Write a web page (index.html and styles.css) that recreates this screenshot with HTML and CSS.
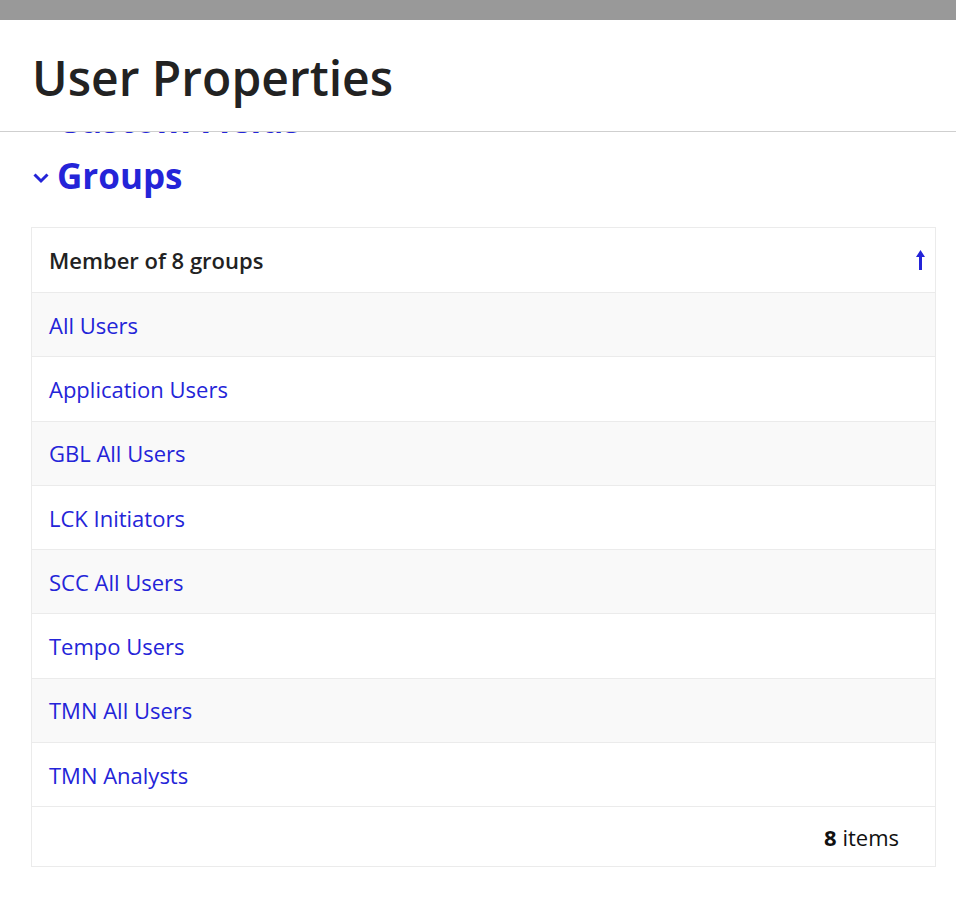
FILE: index.html
```html
<!DOCTYPE html>
<html lang="en">

<head>
    <meta charset="UTF-8">
    <meta name="viewport" content="width=device-width, initial-scale=1.0">
    <title>User Properties</title>
    <link rel="stylesheet" href="styles.css">
</head>

<body>
    <div class="topbar"></div>

    <header class="page-header">
        <h1>User Properties</h1>
    </header>

    <main class="content">
        <div class="scroller">
            <section class="panel">
                <h2 class="panel-title">
                    <svg class="chevron" viewBox="0 0 16 11" width="16" height="11"><path d="M1.5 1.5L8 8l6.5-6.5" fill="none" stroke="currentColor" stroke-width="3"/></svg>
                    Custom Fields
                </h2>
            </section>

            <section class="panel">
                <h2 class="panel-title">
                    <svg class="chevron" viewBox="0 0 16 11" width="16" height="11"><path d="M1.5 1.5L8 8l6.5-6.5" fill="none" stroke="currentColor" stroke-width="3"/></svg>
                    Groups
                </h2>

                <table class="grid">
                    <thead>
                        <tr>
                            <th>
                                <div class="th-inner">
                                    <span>Member of 8 groups</span>
                                    <svg class="sort-icon" viewBox="0 0 9 20" width="9" height="20"><path d="M4.5 0L9 7H6v13H3V7H0z" fill="currentColor"/></svg>
                                </div>
                            </th>
                        </tr>
                    </thead>
                    <tbody>
                        <tr><td><a href="#">All Users</a></td></tr>
                        <tr><td><a href="#">Application Users</a></td></tr>
                        <tr><td><a href="#">GBL All Users</a></td></tr>
                        <tr><td><a href="#">LCK Initiators</a></td></tr>
                        <tr><td><a href="#">SCC All Users</a></td></tr>
                        <tr><td><a href="#">Tempo Users</a></td></tr>
                        <tr><td><a href="#">TMN All Users</a></td></tr>
                        <tr><td><a href="#">TMN Analysts</a></td></tr>
                    </tbody>
                    <tfoot>
                        <tr><td><strong>8</strong> items</td></tr>
                    </tfoot>
                </table>
            </section>
        </div>
    </main>
</body>

</html>
```

FILE: styles.css
```css
* {
    margin: 0;
    padding: 0;
    box-sizing: border-box;
}

body {
    font-family: "Open Sans", "Noto Sans", sans-serif;
    background-color: #fff;
    color: #222;
    height: 100vh;
    display: flex;
    flex-direction: column;
    overflow: hidden;
}

.topbar {
    height: 20px;
    background-color: #999;
    flex-shrink: 0;
}

.page-header {
    height: 112px;
    padding-left: 32px;
    display: flex;
    align-items: center;
    border-bottom: 1px solid #cfcfcf;
    background-color: #fff;
    flex-shrink: 0;
}

.page-header h1 {
    font-size: 48px;
    font-weight: 600;
    line-height: 1;
    margin-top: 4px;
}

.content {
    flex: 1;
    overflow: hidden;
}

/* content is scrolled so the previous panel sits partly under the header */
.scroller {
    margin-top: -35px;
    padding: 0 20px 0 31px;
}

.panel + .panel {
    margin-top: 10px;
}

.panel-title {
    display: flex;
    align-items: center;
    gap: 8px;
    color: #2424d8;
    font-size: 35px;
    font-weight: 700;
    line-height: 46px;
    padding-left: 2px;
}

.chevron {
    flex-shrink: 0;
    margin-top: 5px;
}

.grid {
    width: 100%;
    margin-top: 28px;
    border-collapse: collapse;
    border: 1px solid #ebebeb;
    font-size: 22px;
}

.grid th,
.grid td {
    text-align: left;
    padding: 0 17px;
    height: 64.3px;
    border-bottom: 1px solid #ebebeb;
}

.grid th {
    font-weight: 600;
    height: 65px;
}

.th-inner {
    display: flex;
    justify-content: space-between;
    align-items: center;
}

.sort-icon {
    color: #2424d8;
    margin-right: -7px;
}

.grid tbody tr:nth-child(odd) {
    background-color: #f9f9f9;
}

.grid a {
    color: #2424d8;
    text-decoration: none;
}

.grid tfoot td {
    text-align: right;
    height: 60px;
    padding-right: 36px;
    color: #111;
}

.grid tfoot strong {
    font-weight: 700;
}
```
